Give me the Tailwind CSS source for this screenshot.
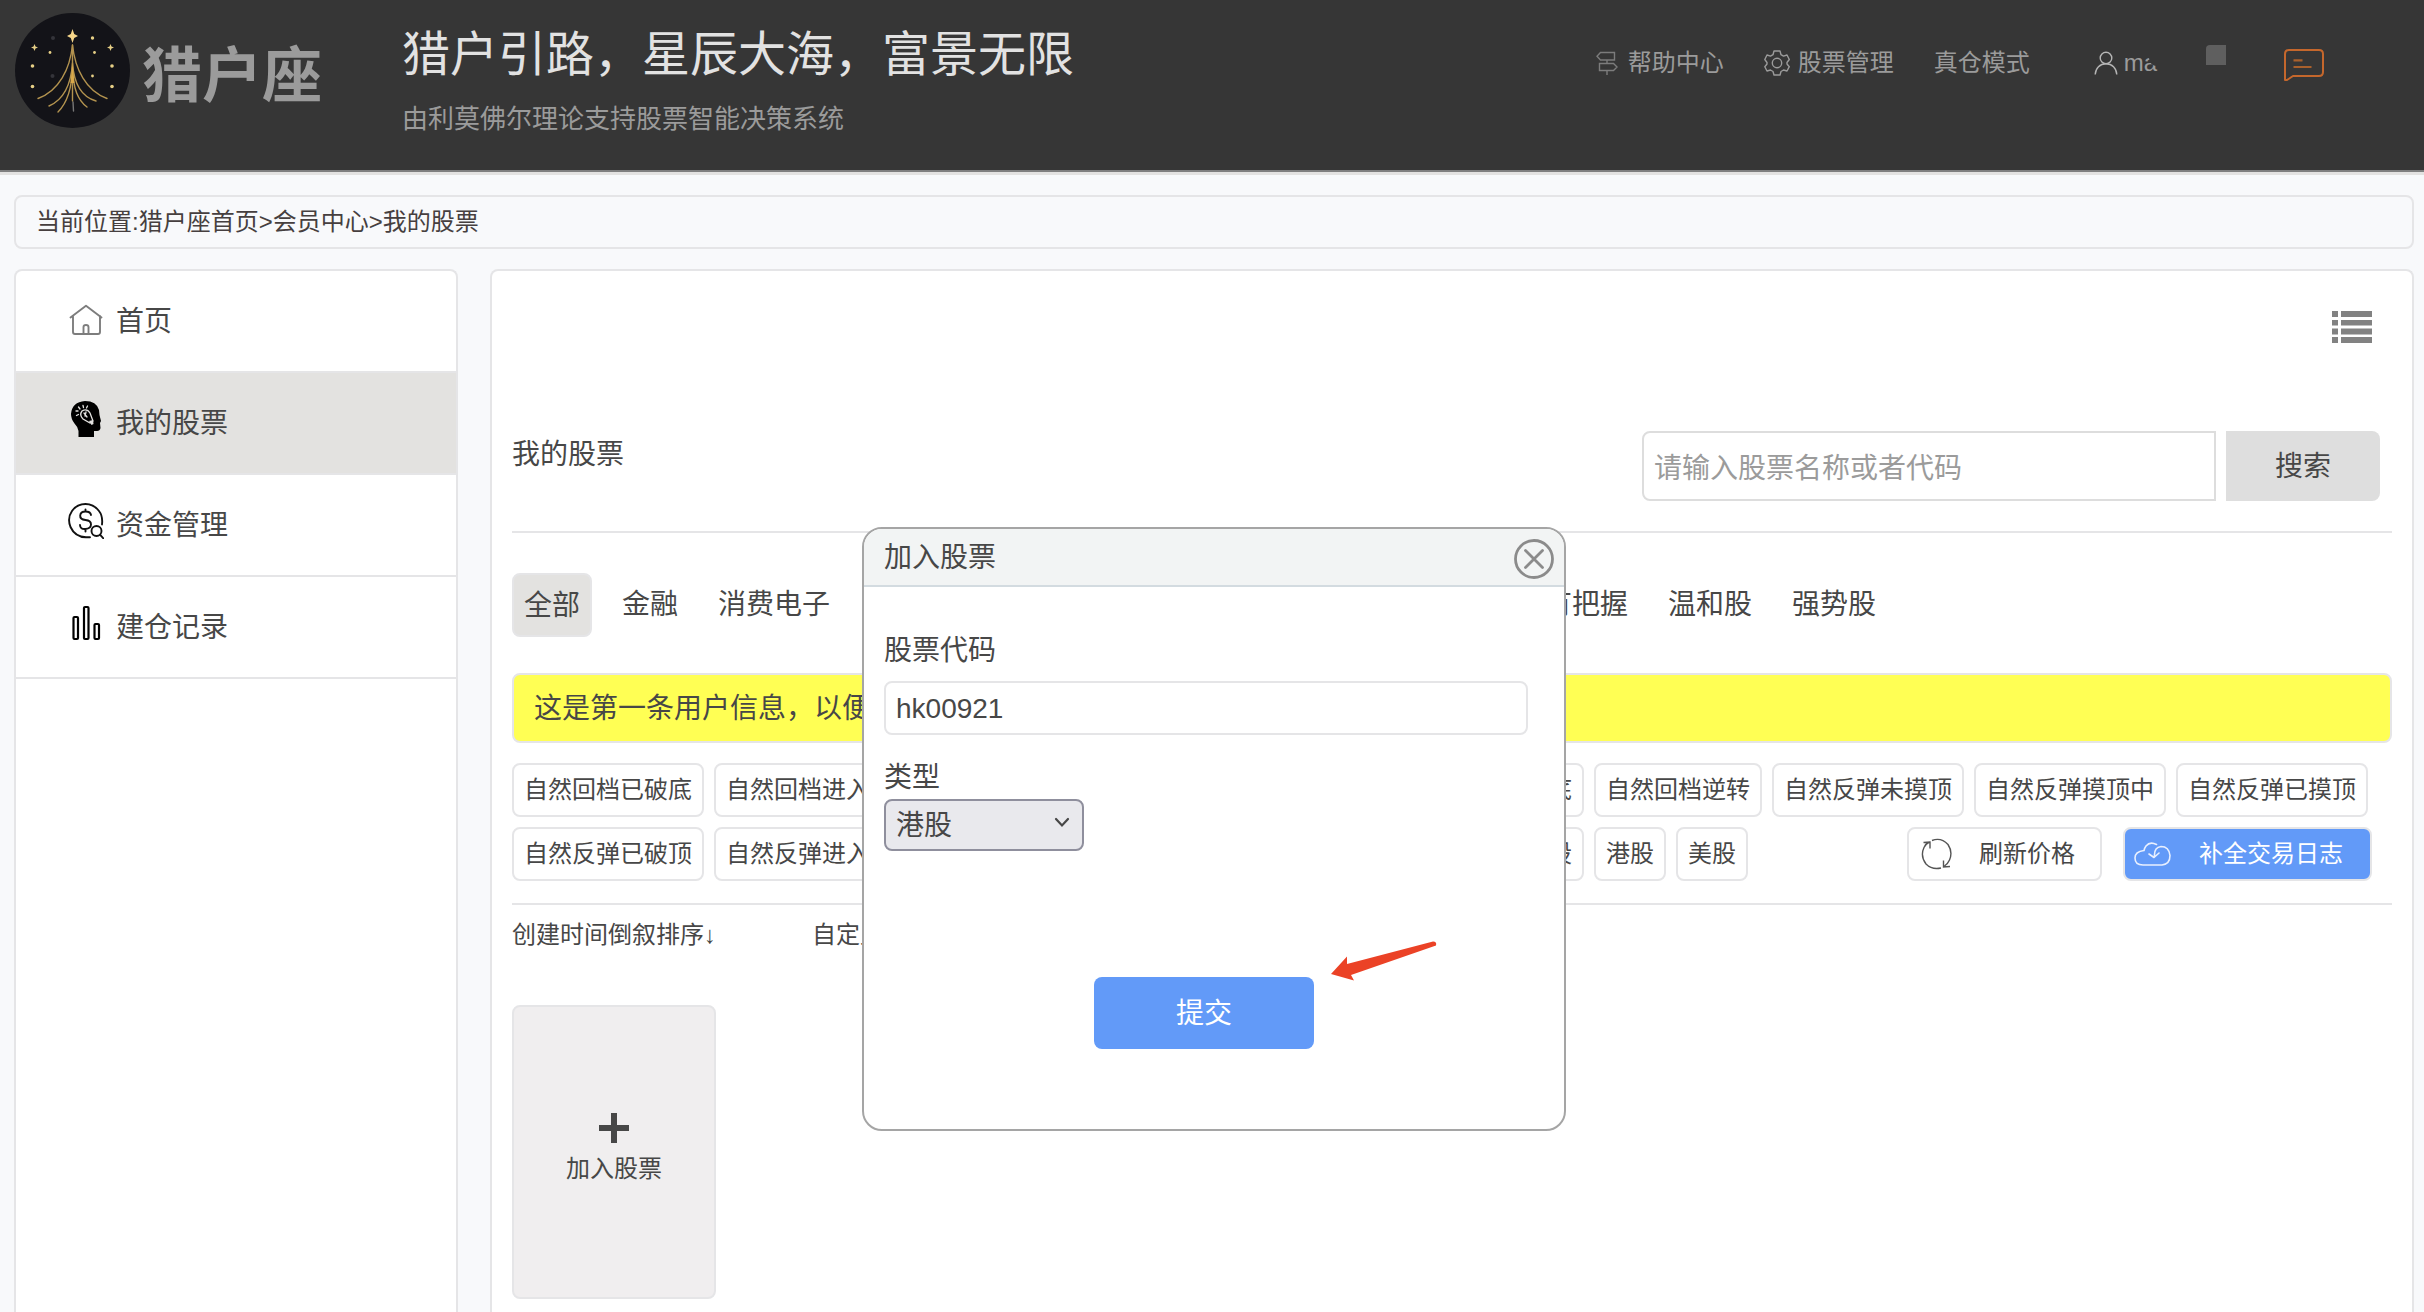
<!DOCTYPE html>
<html lang="zh-CN">
<head>
<meta charset="utf-8">
<title>我的股票 - 猎户座</title>
<script src="https://cdn.jsdelivr.net/npm/@tailwindcss/browser@4"></script>
</head>
<body class="relative flex h-screen flex-col overflow-hidden bg-[#f8f9fb] font-['Liberation_Sans','Noto_Sans_CJK_SC',sans-serif] text-2xl text-[#474747]">

<header class="flex h-[172px] shrink-0 items-start border-b-2 border-[#7f7f7f] bg-[#363636] pr-[100px] pl-[15px] text-[#9b9b9b] shadow-[0_3px_0_#e3e2e1]">
  <a href="#" class="mt-[13px] flex items-center gap-3">
    <svg class="size-[115px]" viewBox="0 0 115 115" fill="none" aria-hidden="true">
      <circle cx="57.500" cy="57.500" r="57.500" fill="#131318"/>
      <g stroke="#b3934f" stroke-width="1.400" stroke-linecap="round">
        <path d="M57.500 32C55 56 44 78 23 85.500M57.500 32C60 56 71 78 92 85.500"/>
        <path d="M57.500 50C56 72 48 87 34 93M57.500 50C59 72 67 84 81 88"/>
        <path d="M57.500 54C57 76 52 90 43 99M57.500 54C58 76 63 87 72 94"/>
        <path d="M57.500 32V88"/>
        <path d="M58 89L58.500 98" stroke="#777"/>
      </g>
      <path d="M57.500 50L59.500 70H55.500Z" fill="#d9a94a"/>
      <path d="M57.500 16L59.200 21L63 23L59.200 25L57.500 30L55.800 25L52 23L55.800 21Z" fill="#f6d68a"/>
      <g fill="#e6cf86">
        <path d="M19.500 31L20.500 33.500L23 34.500L20.500 35.500L19.500 38L18.500 35.500L16 34.500L18.500 33.500Z"/>
        <path d="M95.500 31L96.500 33.500L99 34.500L96.500 35.500L95.500 38L94.500 35.500L92 34.500L94.500 33.500Z"/>
        <circle cx="77.500" cy="25" r="1.700"/><circle cx="35" cy="39.500" r="1.400"/><circle cx="79.500" cy="39.500" r="1.400"/>
        <circle cx="17.500" cy="53" r="1.800"/><circle cx="97" cy="53" r="1.800"/><circle cx="77.500" cy="63" r="1.400"/>
        <circle cx="17.500" cy="73.500" r="1.800"/><circle cx="97" cy="73.500" r="1.800"/>
      </g>
      <g fill="#34343a"><circle cx="38" cy="25" r="2"/><circle cx="37.500" cy="63" r="2"/></g>
    </svg>
    <span class="mt-3 text-[60px] leading-[72px] font-bold">猎户座</span>
  </a>
  <div class="mt-[23px] ml-20 flex flex-col gap-[14px]">
    <h1 class="text-5xl leading-[64px] text-[#e2e2e2]">猎户引路，星辰大海，富景无限</h1>
    <p class="text-[26px] leading-9">由利莫佛尔理论支持股票智能决策系统</p>
  </div>
  <nav class="mt-[45px] ml-auto flex h-9 items-center whitespace-nowrap">
    <a href="#" class="flex items-center gap-[10px]">
      <svg class="h-6 w-[22px]" viewBox="0 0 22 24" fill="none" stroke="#7c7c7c" stroke-width="1.400" aria-hidden="true"><path d="M4.500 1.500H18.500V9H4.500L1 5.200ZM3.500 12.500H17.500L21 16L17.500 19.500H3.500ZM11 9V12.500M11 19.500V24"/></svg>
      帮助中心
    </a>
    <a href="#" class="ml-10 flex items-center gap-2">
      <svg class="size-[26px]" viewBox="0 0 26 26" fill="none" stroke="#9b9b9b" stroke-width="1.400" stroke-linejoin="round" aria-hidden="true"><path d="M10 1H16L17 4.700L19.500 6.100L23 5L25.300 9.500L23 12.500V14L25.300 16.700L23 21L19.500 20L17 21.500L16 25H10L9 21.500L6.500 20L3 21L0.800 16.700L3 14V12.500L0.800 9.500L3 5L6.500 6.100L9 4.700Z"/><circle cx="13" cy="13" r="4.700"/></svg>
      股票管理
    </a>
    <a href="#" class="ml-10">真仓模式</a>
    <a href="#" class="ml-16 flex items-center gap-[6px]">
      <svg class="size-6" viewBox="0 0 24 24" fill="none" stroke="#b5b5b5" stroke-width="1.400" aria-hidden="true"><circle cx="12" cy="7" r="5.800"/><path d="M1.200 23.500C1.500 17 6 12.800 12 12.800S22.500 17 22.800 23.500"/></svg>
      <span class="relative">ma<span class="absolute top-2 right-0 h-[11px] w-2 rounded-bl-full bg-[#363636]"></span></span>
    </a>
    <span class="mb-4 ml-[49px] size-5 rounded-tl-sm bg-[#5f5f5f]"></span>
    <a href="#" aria-label="消息" class="ml-[58px]">
      <svg class="mt-1 h-8 w-10" viewBox="0 0 40 32" fill="none" stroke="#c5672c" stroke-width="2" stroke-linejoin="round" aria-hidden="true"><path d="M5 1H35Q39 1 39 5V23Q39 27 35 27H9L3 31H1V5Q1 1 5 1Z"/><path d="M9.500 11.300H18.500M9.500 18H27.500" stroke="#a9602c" stroke-width="2.200"/></svg>
    </a>
  </nav>
</header>

<div class="mt-[23px] mr-[10px] ml-[14px] flex h-[54px] shrink-0 items-center rounded-lg border-2 border-[#e5e5e7] px-5 text-[#463f3f]">
  <span>当前位置:<a href="#">猎户座首页</a>&gt;<a href="#">会员中心</a>&gt;<a href="#">我的股票</a></span>
</div>

<div class="mt-5 mr-[10px] ml-[14px] flex min-h-0 flex-1 gap-8">
  <aside class="w-[444px] shrink-0 rounded-t-lg border-2 border-b-0 border-[#e5e5e7] bg-white text-[28px]">
    <nav>
      <a href="#" class="flex h-[102px] items-center gap-3 border-b-2 border-[#e5e5e7] pt-[2px] pl-[52px]">
        <svg class="mb-[10px] size-9" viewBox="0 0 36 36" fill="none" stroke="#7d7d7d" stroke-width="1.900" stroke-linecap="round" stroke-linejoin="round" aria-hidden="true"><path d="M2.500 18.500L18 6.800L33.500 18.500M5 17V33Q5 35 7 35H30Q32 35 32 33V17M15.500 35V28Q15.500 26 18 26T20.500 28V35"/></svg>
        首页
      </a>
      <a href="#" class="flex h-[102px] items-center gap-3 border-b-2 border-[#e5e5e7] bg-[#e3e2e0] pt-[2px] pl-[52px]">
        <svg class="mb-[10px] size-9" viewBox="0 0 36 36" aria-hidden="true"><path d="M10.500 36V30Q10 26 6.500 22.500Q3 18 3 13Q4 1 17 0Q28.500 0 31 9L31.500 14L33 20L32 22L32.500 27Q32 30 29 30H26V36Z" fill="#000"/><g fill="none" stroke="#e3e2e0" stroke-width="1.300" stroke-linecap="round"><path d="M14 10Q19 7 22 12L25 20L22 22L15 18Q11 14 14 10Z"/><path d="M16 12L19 16M18 11L17 15" /><path d="M15 4.500L15.500 6.500M19.500 5L18.500 7M10.500 6L12 8M8 10H10M8.500 14.500L10.500 13.500"/></g><path d="M21 20L25 19L25.500 23L23.500 24Z" fill="#e3e2e0"/></svg>
        我的股票
      </a>
      <a href="#" class="flex h-[102px] items-center gap-3 border-b-2 border-[#e5e5e7] pt-[2px] pl-[52px]">
        <svg class="mb-[10px] size-9" viewBox="0 0 36 36" fill="none" stroke="#111" stroke-width="1.900" stroke-linecap="round" aria-hidden="true"><path d="M34 21.500Q35 13 31 8Q25.500 1 17.500 1Q9 1 4 8Q-1 15 2.500 24Q7 34 18 34.200H22"/><path d="M23 12Q22.500 8.500 17.500 8.500T12.200 12.500T17.500 17T23 21.500T17.500 26T12 22M17.500 6.500V8.500M17.500 26V28.500"/><circle cx="28.500" cy="28" r="5"/><path d="M32 31.700L35.500 35.500"/></svg>
        资金管理
      </a>
      <a href="#" class="flex h-[102px] items-center gap-3 border-b-2 border-[#e5e5e7] pt-[2px] pl-[52px]">
        <svg class="mb-[10px] size-9" viewBox="0 0 36 36" fill="none" stroke="#000" stroke-width="2.200" aria-hidden="true"><rect x="5.500" y="12" width="4.500" height="22" rx="1"/><rect x="16" y="2" width="4.500" height="32" rx="1"/><rect x="26.500" y="19" width="4.500" height="15" rx="1"/></svg>
        建仓记录
      </a>
    </nav>
  </aside>

  <main class="min-w-0 flex-1 rounded-t-lg border-2 border-b-0 border-[#e5e5e7] bg-white px-5">
    <div class="flex justify-end pt-10 pr-5">
      <button type="button" aria-label="列表视图">
        <svg class="h-8 w-10" viewBox="0 0 40 32" fill="#828282" aria-hidden="true"><path d="M0 0H6V6H0ZM9 0H40V6H9ZM0 9H6V14.500H0ZM9 9H40V14.500H9ZM0 17.500H6V23.500H0ZM9 17.500H40V23.500H9ZM0 26H6V32H0ZM9 26H40V32H9Z"/></svg>
      </button>
    </div>
    <div class="mt-[88px] flex items-start justify-between border-b-2 border-[#e5e5e7] pr-3 pb-[30px] text-[28px]">
      <h2 class="leading-[48px]">我的股票</h2>
      <form class="flex gap-[10px]">
        <input type="text" aria-label="股票名称或者代码" placeholder="请输入股票名称或者代码" class="h-[70px] w-[574px] rounded-l-lg border-2 border-[#dddddd] bg-white px-[10px] pt-[6px] outline-none placeholder:text-[#9b9b9b]">
        <button type="button" class="h-[70px] w-[154px] rounded-r-lg bg-[#dedede] pt-[2px]">搜索</button>
      </form>
    </div>

    <div class="mt-10 flex h-16 items-center gap-10 text-[28px] whitespace-nowrap">
      <a href="#" class="-mr-[10px] flex h-16 items-center rounded-lg border-2 border-[#e5e5e7] bg-[#e3e2e0] px-[10px] pt-[2px]">全部</a>
      <a href="#">金融</a>
      <a href="#">消费电子</a>
      <a href="#" class="ml-[674px]">有把握</a>
      <a href="#">温和股</a>
      <a href="#">强势股</a>
    </div>

    <div class="mt-9 flex h-[70px] items-center rounded-lg border-2 border-[#e5e5e7] bg-[#ffff54] px-5 pt-[2px] text-[28px]">这是第一条用户信息，以便</div>

    <div class="mt-5 flex flex-col gap-[10px] border-b-2 border-[#e5e5e7] pb-[22px] whitespace-nowrap">
      <div class="flex gap-[10px]">
        <button type="button" class="h-[54px] rounded-lg border-2 border-[#e5e5e7] px-[10px]">自然回档已破底</button>
        <button type="button" class="h-[54px] rounded-lg border-2 border-[#e5e5e7] px-[10px]">自然回档进入自然反弹</button>
        <button type="button" class="h-[54px] rounded-lg border-2 border-[#e5e5e7] px-[10px]">自然回档未摸底</button>
        <button type="button" class="h-[54px] rounded-lg border-2 border-[#e5e5e7] px-[10px]">自然回档摸底中</button>
        <button type="button" class="h-[54px] rounded-lg border-2 border-[#e5e5e7] px-[10px]">自然回档已摸底</button>
        <button type="button" class="h-[54px] rounded-lg border-2 border-[#e5e5e7] px-[10px]">自然回档逆转</button>
        <button type="button" class="h-[54px] rounded-lg border-2 border-[#e5e5e7] px-[10px]">自然反弹未摸顶</button>
        <button type="button" class="h-[54px] rounded-lg border-2 border-[#e5e5e7] px-[10px]">自然反弹摸顶中</button>
        <button type="button" class="h-[54px] rounded-lg border-2 border-[#e5e5e7] px-[10px]">自然反弹已摸顶</button>
      </div>
      <div class="flex gap-[10px]">
        <div class="flex w-[1072px] justify-between">
          <div class="flex gap-[10px]">
            <button type="button" class="h-[54px] rounded-lg border-2 border-[#e5e5e7] px-[10px]">自然反弹已破顶</button>
            <button type="button" class="h-[54px] rounded-lg border-2 border-[#e5e5e7] px-[10px]">自然反弹进入自然回档</button>
          </div>
          <button type="button" class="h-[54px] rounded-lg border-2 border-[#e5e5e7] px-[10px]">A股</button>
        </div>
        <button type="button" class="h-[54px] rounded-lg border-2 border-[#e5e5e7] px-[10px]">港股</button>
        <button type="button" class="h-[54px] rounded-lg border-2 border-[#e5e5e7] px-[10px]">美股</button>
        <div class="mr-5 ml-auto flex gap-[21px]">
          <button type="button" class="flex h-[54px] w-[195px] items-center gap-[26px] rounded-lg border-2 border-[#e5e5e7] pl-3">
            <svg class="size-8" viewBox="0 0 32 32" fill="none" stroke="#555" stroke-width="1.400" aria-hidden="true"><path d="M11 2.500Q20 -1 27 6.500Q32 14 28.500 22Q27 25.500 23.500 28M20 30Q11 32 5 26Q-1 18 3 9.500Q5 5.500 8.500 4M2.500 4.500L9 4V10.500M22.500 22.500V29L29 28.500"/></svg>
            刷新价格
          </button>
          <button type="button" class="flex h-[54px] w-[249px] items-center gap-7 rounded-lg border-2 border-[#e5e5e7] bg-[#629af8] pl-[9px] text-white">
            <svg class="h-6 w-[37px]" viewBox="0 0 37 24" fill="none" stroke="#e9f0fe" stroke-width="1.600" stroke-linecap="round" stroke-linejoin="round" aria-hidden="true"><path d="M22.500 2.500Q16 -1 12 4Q10.500 6 10 8.500Q1 9.500 1 16Q1 23 9 23H28Q36 22 36 13.500Q35 4.500 27 4.500Q20 5.500 20.500 14M15 12L20 15.500L25 11"/></svg>
            补全交易日志
          </button>
        </div>
      </div>
    </div>

    <div class="mt-3 flex gap-24 leading-9">
      <a href="#">创建时间倒叙排序↓</a>
      <a href="#">自定义</a>
    </div>

    <button type="button" class="mt-[52px] flex h-[294px] w-[204px] flex-col items-center justify-center gap-2 rounded-lg border-2 border-[#e5e5e7] bg-[#f0eeef] pb-1">
      <svg class="size-[30px]" viewBox="0 0 30 30" fill="#474747" aria-hidden="true"><path d="M12 0H18V12H30V18H18V30H12V18H0V12H12Z"/></svg>
      <span class="leading-9">加入股票</span>
    </button>
  </main>
</div>

<div class="absolute inset-x-0 top-[527px] flex justify-center pl-1">
  <section role="dialog" aria-labelledby="dialog-title" class="relative h-[604px] w-[704px] overflow-hidden rounded-[20px] border-2 border-[#a5a5a5] bg-white text-[28px]">
    <div class="flex h-[58px] items-center justify-between border-b-2 border-[#d3dbe0] bg-[#f2f4f4] pr-[10px] pl-5">
      <h2 id="dialog-title" class="pt-[2px]">加入股票</h2>
      <button type="button" aria-label="关闭" class="-mb-1">
        <svg class="size-10" viewBox="0 0 40 40" fill="none" stroke="#8b8b8b" stroke-width="2.800" stroke-linecap="round" aria-hidden="true"><circle cx="20" cy="20" r="18.500"/><path d="M11.500 11.500L28.500 28.500M28.500 11.500L11.500 28.500"/></svg>
      </button>
    </div>
    <form class="flex flex-col items-start px-5 pt-10">
      <label for="code" class="leading-[48px]">股票代码</label>
      <input id="code" type="text" value="hk00921" class="mt-[6px] h-[54px] w-[644px] rounded-lg border-2 border-[#e5e5e7] px-[10px] pt-[2px] outline-none">
      <label for="market" class="mt-[22px] leading-[42px]">类型</label>
      <div class="relative">
        <select id="market" class="block h-[52px] w-[200px] appearance-none rounded-lg border-2 border-[#8f8f9d] bg-[#e9e9ed] px-[10px] pt-[2px]">
          <option>港股</option>
        </select>
        <svg class="pointer-events-none absolute top-[18px] right-[14px] h-[11px] w-4" viewBox="0 0 16 11" fill="none" stroke="#474747" stroke-width="2.200" stroke-linecap="round" aria-hidden="true"><path d="M2 2L8 8.500L14 2"/></svg>
      </div>
      <button type="button" class="mt-[126px] ml-[210px] h-[72px] w-[220px] rounded-lg bg-[#629af8] pt-[2px] text-white">提交</button>
    </form>
    <svg class="absolute top-[412px] left-[466px] h-[42px] w-[108px]" viewBox="0 0 108 42" fill="#eb4226" aria-hidden="true"><path d="M1 33L17 15.500V23L103 0.500Q107 0.500 106 4.500L21 34L24 39.500Z"/></svg>
  </section>
</div>

</body>
</html>
